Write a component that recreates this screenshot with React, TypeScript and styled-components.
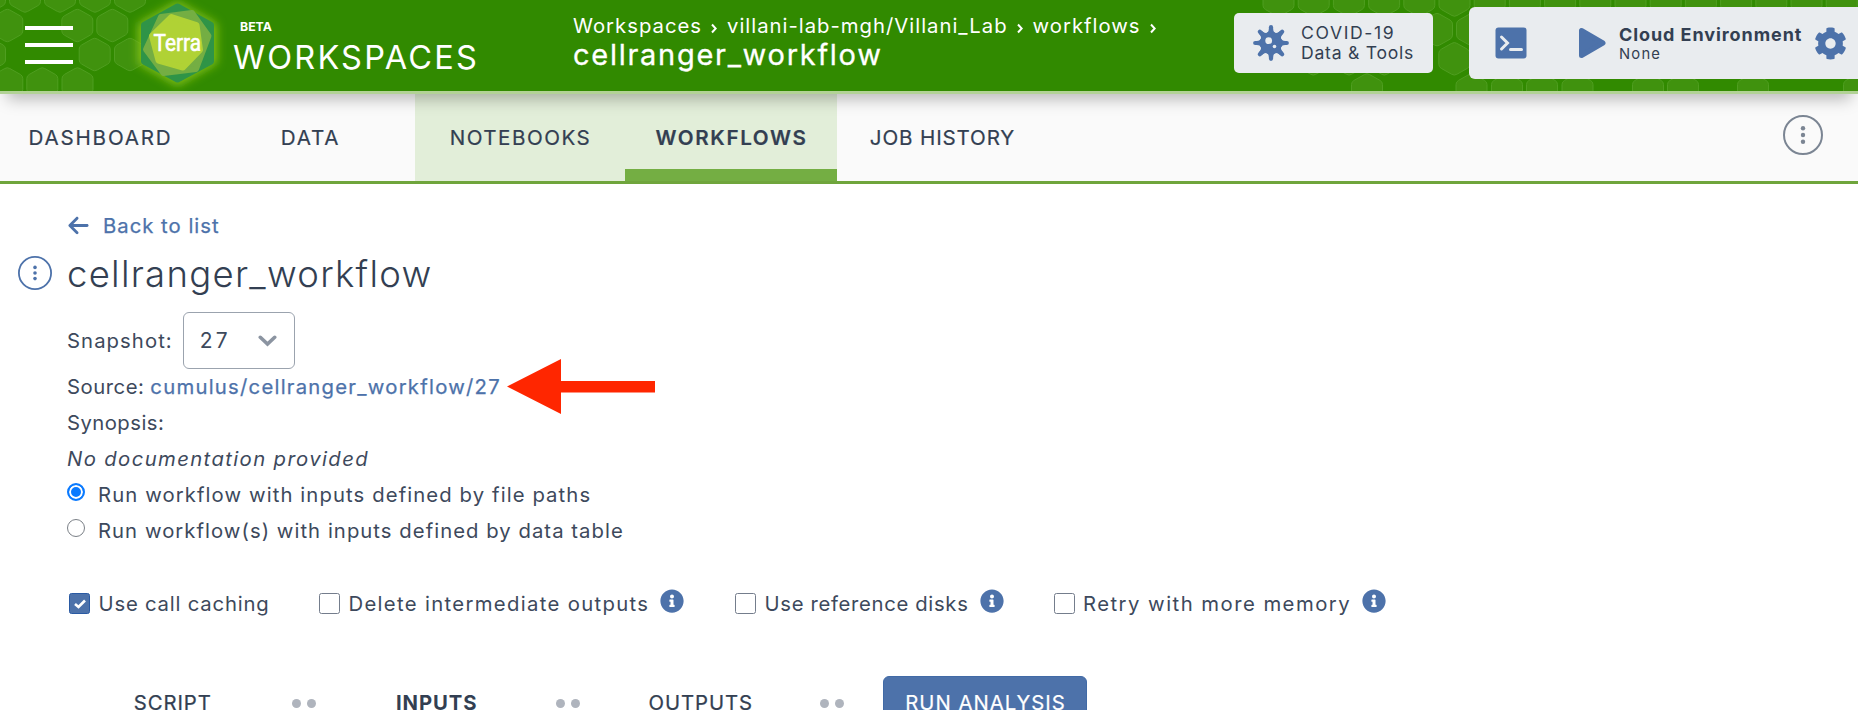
import React from "react";
import styled, { createGlobalStyle, css } from "styled-components";
import { FaCog, FaInfoCircle } from "react-icons/fa";
import { FaArrowLeft } from "react-icons/fa6";

const ink = "#333f52";
const softInk = "#3d495c";
const blue = "#4d72aa";
const panel = "#e9ecef";

const GlobalStyle = createGlobalStyle`
  * { box-sizing: border-box; }
  body {
    margin: 0;
    background: #fff;
    color: ${ink};
    font-family: Inter, "Open Sans", sans-serif;
    font-size: 20.3px;
    overflow: hidden;
  }
`;

const Page = styled.div`
  height: 710px;
  overflow: hidden;
`;

/* ---------- header ---------- */

const Header = styled.header`
  position: relative;
  z-index: 1;
  display: flex;
  height: 94px;
  background: #318a00;
  border-bottom: 3px solid #b2d296;
  box-shadow: 0 12px 15px -7px rgba(0, 0, 0, 0.27);
  color: #fff;
`;

const HexBackdrop = styled.svg`
  position: absolute;
  inset: 0;
  width: 1858px;
  height: 91px;
`;

const MenuButton = styled.div`
  position: relative;
  display: flex;
  flex-direction: column;
  gap: 13px;
  width: 48px;
  margin: 26px 0 0 25px;
`;

const MenuBar = styled.span`
  height: 4px;
  background: #fff;
`;

const Logo = styled.svg`
  position: relative;
  flex: none;
  width: 120px;
  height: 91px;
  margin-left: 44px;
`;

const Brand = styled.div`
  position: relative;
  display: flex;
  flex-direction: column;
  width: 340px;
  margin-left: -4px;
  padding-top: 18px;
`;

const Beta = styled.span`
  padding-left: 7px;
  font-size: 12.3px;
  font-weight: 700;
  line-height: 17px;
`;

const BrandName = styled.span`
  font-size: 32.5px;
  line-height: 46px;
  letter-spacing: 2.2px;
`;

const Location = styled.div`
  position: relative;
  display: flex;
  flex-direction: column;
  width: 661px;
  padding-top: 14px;
`;

const Crumbs = styled.div`
  display: flex;
  line-height: 24px;
  letter-spacing: 1px;
`;

const Separator = styled.svg`
  width: 6px;
  height: 11px;
  margin: 9px 10px 0 9px;
  fill: none;
  stroke: #fff;
  stroke-width: 2;
`;

const LocationTitle = styled.div`
  font-size: 29px;
  line-height: 33px;
  letter-spacing: 1.72px;
  -webkit-text-stroke: 0.3px #fff;
`;

const CovidCard = styled.div`
  position: relative;
  display: flex;
  align-items: center;
  flex: none;
  width: 199px;
  height: 60px;
  margin-top: 13px;
  padding-left: 18px;
  border-radius: 5px;
  background: ${panel};
  color: ${ink};
  font-size: 17.6px;
  line-height: 20px;
`;

const CovidText = styled.div`
  display: flex;
  flex-direction: column;
  margin-left: 11px;
`;

const Tracked = styled.span<{ $by: number }>`
  letter-spacing: ${(p) => p.$by}px;
  white-space: nowrap;
`;

const EnvCard = styled.div`
  position: relative;
  display: flex;
  align-items: center;
  flex: none;
  width: 389px;
  height: 72px;
  margin: 7px 0 0 36px;
  padding-left: 26px;
  border-radius: 6px 0 0 6px;
  background: ${panel};
  color: ${ink};
`;

const PlayIcon = styled.svg`
  margin-left: 51px;
`;

const EnvText = styled.div`
  display: flex;
  flex-direction: column;
  width: 195px;
  margin-left: 13px;
  padding-top: 1.5px;
`;

const EnvName = styled.span`
  font-size: 18px;
  font-weight: 700;
  line-height: 20px;
  letter-spacing: 0.92px;
  white-space: nowrap;
`;

const EnvStatus = styled.span`
  font-size: 14.8px;
  line-height: 18px;
  letter-spacing: 1.2px;
`;

/* ---------- tabs ---------- */

const TabBar = styled.nav`
  display: flex;
  height: 90px;
  padding-right: 35px;
  border-bottom: 3px solid #6fa53c;
  background: #fafafa;
  overflow: hidden;
`;

const Tab = styled.div<{ $tinted?: boolean; $active?: boolean; $track: number }>`
  display: flex;
  justify-content: center;
  flex: none;
  width: ${(p) => (p.$active ? 212 : 210)}px;
  height: 87px;
  padding-left: 1px;
  font-size: 20.6px;
  line-height: 87px;
  letter-spacing: ${(p) => p.$track}px;
  -webkit-text-stroke: 0.2px ${ink};
  &:first-child { margin-left: -5px; }
  ${(p) => p.$tinted && css`background: #e2eed9;`}
  ${(p) => p.$active && css`
    font-weight: 600;
    border-bottom: 12px solid #74ae43;
  `}
`;

const TabMenu = styled.div`
  margin: 21px 0 0 auto;
`;

/* ---------- main ---------- */

const Main = styled.main`
  display: flex;
  flex-direction: column;
  padding: 24px 0 0 67px;
`;

const BackLink = styled.div`
  display: flex;
  align-items: center;
  height: 35px;
  gap: 13px;
  color: ${blue};
  letter-spacing: 1px;
  -webkit-text-stroke: 0.25px ${blue};
`;

const TitleRow = styled.div`
  display: flex;
  align-items: center;
  height: 44px;
  margin: 8px 0 17px -49px;
  gap: 15px;
`;

const Title = styled.h1`
  margin: 2px 0 0;
  font-size: 36.5px;
  font-weight: 300;
  line-height: 40px;
  letter-spacing: 1.28px;
`;

const SnapshotRow = styled.div`
  display: flex;
  align-items: center;
  height: 57px;
  color: ${softInk};
`;

const Select = styled.div`
  display: flex;
  align-items: center;
  justify-content: space-between;
  width: 112px;
  height: 57px;
  margin-left: 10.5px;
  padding: 0 17.5px 0 15.5px;
  border: 1.5px solid #9ba3ae;
  border-radius: 6px;
  font-size: 21px;
  letter-spacing: 3.2px;
`;

const Line = styled.div<{ $track?: number; $italic?: boolean }>`
  display: flex;
  align-items: center;
  height: 36px;
  padding-bottom: 2px;
  color: ${softInk};
  letter-spacing: ${(p) => p.$track ?? 0}px;
  font-style: ${(p) => (p.$italic ? "italic" : "normal")};
`;

const SourceLink = styled.a`
  margin-left: 6px;
  color: ${blue};
  letter-spacing: 1.25px;
  -webkit-text-stroke: 0.25px ${blue};
`;

const PointerArrow = styled.svg`
  flex: none;
  margin: -9px 0 -11px 6px;
`;

const Radio = styled.span<{ $on?: boolean }>`
  width: 18px;
  height: 18px;
  margin: -4px 13px 0 0;
  border: ${(p) => (p.$on ? "2px solid #0a7aff" : "1.5px solid #7a7f86")};
  border-radius: 50%;
  background: ${(p) => (p.$on ? "#0a7aff" : "#fff")};
  box-shadow: ${(p) => (p.$on ? "inset 0 0 0 2px #fff" : "none")};
`;

const Options = styled.div`
  display: flex;
  align-items: center;
  height: 36px;
  margin-top: 37px;
  padding-bottom: 2px;
  color: ${softInk};
`;

const Option = styled.div<{ $width: number; $track: number }>`
  display: flex;
  align-items: center;
  width: ${(p) => p.$width}px;
  letter-spacing: ${(p) => p.$track}px;
  white-space: nowrap;
`;

const CheckBox = styled.span<{ $on?: boolean }>`
  display: flex;
  align-items: center;
  justify-content: center;
  flex: none;
  width: 21px;
  height: 21px;
  margin: 1px 8.5px 0 2px;
  border: 1.5px solid ${(p) => (p.$on ? "#2a5aa3" : "#747d8c")};
  border-radius: 2.5px;
  background: ${(p) => (p.$on ? blue : "#fff")};
`;

const Info = styled(FaInfoCircle)`
  flex: none;
  margin: -4px 0 0 11px;
  color: ${blue};
`;

const Steps = styled.div`
  display: flex;
  align-items: center;
  height: 54px;
  margin-top: 54px;
`;

const Step = styled.div<{ $current?: boolean }>`
  width: 210px;
  padding: 0 0 2px 1.5px;
  text-align: center;
  letter-spacing: 0.95px;
  font-weight: ${(p) => (p.$current ? 700 : 400)};
  -webkit-text-stroke: ${(p) => (p.$current ? "0" : "0.25px")} ${ink};
`;

const Dots = styled.div`
  display: flex;
  justify-content: center;
  gap: 6px;
  width: 54px;
`;

const Dot = styled.span`
  width: 9px;
  height: 9px;
  border-radius: 50%;
  background: #afb4bd;
`;

const RunButton = styled.div`
  width: 204px;
  height: 54px;
  margin-left: 24px;
  padding-left: 1px;
  border: 1px solid #416aa6;
  border-radius: 6px;
  background: ${blue};
  color: #fff;
  line-height: 52px;
  text-align: center;
  letter-spacing: 1px;
  -webkit-text-stroke: 0.2px #fff;
`;

/* ---------- drawings ---------- */

const hexes: [number, number][] = [
  ...[-10, 25, 60, 95, 130].map((x) => [x, -4] as [number, number]),
  ...[7.3, 77.3, 112.3].map((x) => [x, 25.5] as [number, number]),
  ...[-10, 94.7, 130].map((x) => [x, 54.5] as [number, number]),
  ...[7.3, 42.3, 77.5].map((x) => [x, 84] as [number, number]),
  ...Array.from({ length: 17 }, (_, i) => [1278.5 + i * 35.2, 0] as [number, number]),
  ...[1437, 1472].map((x) => [x, 29.6] as [number, number]),
  ...[1313.3, 1349, 1384.3, 1454.3].map((x) => [x, 58.8] as [number, number]),
  ...[1367, 1471.5, 1507, 1542, 1577.5, 1648, 1683, 1753, 1859].map((x) => [x, 90] as [number, number]),
];

const HexPattern = () => (
  <HexBackdrop viewBox="0 0 1858 91">
    <defs>
      <path
        id="hex"
        d="M-2.5 -15.5Q0 -17 2.5 -15.5L13 -9.6Q15.5 -8.2 15.5 -5.5V5.5Q15.5 8.2 13 9.6L2.5 15.5Q0 17 -2.5 15.5L-13 9.6Q-15.5 8.2 -15.5 5.5V-5.5Q-15.5 -8.2 -13 -9.6Z"
        fill="#40920e"
        stroke="#4f9e20"
        strokeWidth="1"
      />
    </defs>
    {hexes.map(([x, y], i) => (
      <use key={i} href="#hex" x={x} y={y} />
    ))}
  </HexBackdrop>
);

const TerraLogo = () => (
  <Logo viewBox="0 0 120 91">
    <defs>
      <filter id="glow" x="-40%" y="-40%" width="180%" height="180%">
        <feGaussianBlur stdDeviation="5" />
      </filter>
    </defs>
    <path
      d="M60.5 2L99 24V63L60.5 85L22 63V24Z"
      fill="#84c014"
      stroke="#84c014"
      strokeWidth="2"
      strokeLinejoin="round"
      filter="url(#glow)"
    />
    <g strokeLinejoin="round" strokeWidth="6">
      <path d="M60.5 6.5L94 25V61.5L60.5 79.5L27 61.5V25Z" fill="#2f9447" stroke="#2f9447" />
      <path d="M44 17L75 13L91.5 36L79 69L46.5 73L29 49.5Z" fill="#74ae43" stroke="#74ae43" />
      <path d="M54.5 17L79.5 25L83 50L66 67.5L41.5 60.5L35 36Z" fill="#b0d235" stroke="#b0d235" />
    </g>
    <text
      x="36.5"
      y="51"
      fill="#fff"
      stroke="#fff"
      strokeWidth="0.6"
      fontFamily="Roboto, sans-serif"
      fontSize="23.5"
      textLength="47.5"
      lengthAdjust="spacingAndGlyphs"
    >
      Terra
    </text>
  </Logo>
);

const VirusIcon = () => (
  <svg width="38" height="38" viewBox="-19 -19 38 38">
    {[0, 45, 90, 135, 180, 225, 270, 315].map((a) => (
      <g key={a} transform={`rotate(${a})`}>
        <path d="M0 -15.8V-8" stroke={blue} strokeWidth="4.2" strokeLinecap="round" />
        <path d="M-2.1 -14.5Q-2 -10.5 -5.5 -9.5V-6H5.5V-9.5Q2 -10.5 2.1 -14.5Z" fill={blue} />
      </g>
    ))}
    <circle r="11" fill={blue} />
    <circle cx="-2.3" cy="-2.3" r="3.4" fill={panel} />
    <circle cx="3.5" cy="3.5" r="1.8" fill={panel} />
  </svg>
);

const TerminalIcon = () => (
  <svg width="32" height="32" viewBox="0 0 32 32">
    <rect x="0.5" y="0.5" width="31" height="31" rx="3" fill={blue} />
    <path d="M6.5 10L12.5 16L6.5 22M15.5 22.5H26.5" fill="none" stroke={panel} strokeWidth="3" strokeLinecap="round" />
  </svg>
);

const Chevron = () => (
  <Separator viewBox="0 0 6 11">
    <path d="M1 1.5L4.7 5.5L1 9.5" />
  </Separator>
);

const Kebab = ({ size, color, stroke, dot }: { size: number; color: string; stroke: number; dot: number }) => (
  <svg width={size} height={size} viewBox={`${-size / 2} ${-size / 2} ${size} ${size}`}>
    <circle r={(size - stroke) / 2} fill="none" stroke={color} strokeWidth={stroke} />
    {[-1, 0, 1].map((n) => (
      <circle key={n} cy={n * dot * 3.1} r={dot} fill={color} />
    ))}
  </svg>
);

export default function App() {
  return (
    <Page>
      <GlobalStyle />
      <Header>
        <HexPattern />
        <MenuButton>
          <MenuBar />
          <MenuBar />
          <MenuBar />
        </MenuButton>
        <TerraLogo />
        <Brand>
          <Beta>BETA</Beta>
          <BrandName>WORKSPACES</BrandName>
        </Brand>
        <Location>
          <Crumbs>
            Workspaces
            <Chevron />
            villani-lab-mgh/Villani_Lab
            <Chevron />
            workflows
            <Chevron />
          </Crumbs>
          <LocationTitle>cellranger_workflow</LocationTitle>
        </Location>
        <CovidCard>
          <VirusIcon />
          <CovidText>
            <Tracked $by={1.6}>COVID-19</Tracked>
            <Tracked $by={0.74}>Data &amp; Tools</Tracked>
          </CovidText>
        </CovidCard>
        <EnvCard>
          <TerminalIcon />
          <PlayIcon width="28" height="32" viewBox="0 0 28 32">
            <path d="M3.5 3.5V28.5L25 16Z" fill={blue} stroke={blue} strokeWidth="5" strokeLinejoin="round" />
          </PlayIcon>
          <EnvText>
            <EnvName>Cloud Environment</EnvName>
            <EnvStatus>None</EnvStatus>
          </EnvText>
          <FaCog size={33} color={blue} />
        </EnvCard>
      </Header>

      <TabBar>
        <Tab $track={1.8}>DASHBOARD</Tab>
        <Tab $track={1.8}>DATA</Tab>
        <Tab $track={1.5} $tinted>NOTEBOOKS</Tab>
        <Tab $track={1.65} $tinted $active>WORKFLOWS</Tab>
        <Tab $track={0.85}>JOB HISTORY</Tab>
        <TabMenu>
          <Kebab size={40} color="#7b8593" stroke={2} dot={2.2} />
        </TabMenu>
      </TabBar>

      <Main>
        <BackLink>
          <FaArrowLeft size={23} />
          Back to list
        </BackLink>
        <TitleRow>
          <Kebab size={34} color={blue} stroke={1.8} dot={1.8} />
          <Title>cellranger_workflow</Title>
        </TitleRow>
        <SnapshotRow>
          <Tracked $by={1.07}>Snapshot:</Tracked>
          <Select>
            27
            <svg width="19" height="12" viewBox="0 0 19 12">
              <path d="M2.3 2.3L9.5 9L16.7 2.3" fill="none" stroke="#8b94a1" strokeWidth="3.6" strokeLinecap="round" />
            </svg>
          </Select>
        </SnapshotRow>
        <Line $track={0.52}>
          Source:
          <SourceLink>cumulus/cellranger_workflow/27</SourceLink>
          <PointerArrow width="148" height="56" viewBox="0 0 148 56">
            <path d="M0 27.5L54 0V22H148V33.5H54V55Z" fill="#ff2600" />
          </PointerArrow>
        </Line>
        <Line $track={0.45}>Synopsis:</Line>
        <Line $track={1.38} $italic>No documentation provided</Line>
        <Line $track={1.1}>
          <Radio $on />
          Run workflow with inputs defined by file paths
        </Line>
        <Line $track={1.04}>
          <Radio />
          Run workflow(s) with inputs defined by data table
        </Line>

        <Options>
          <Option $width={250} $track={0.8}>
            <CheckBox $on>
              <svg width="14" height="12" viewBox="0 0 14 12">
                <path d="M2 6L5.5 9L12 2.5" fill="none" stroke="#fff" strokeWidth="2.6" />
              </svg>
            </CheckBox>
            Use call caching
          </Option>
          <Option $width={416} $track={1.33}>
            <CheckBox />
            Delete intermediate outputs
            <Info size={24} />
          </Option>
          <Option $width={318.5} $track={0.67}>
            <CheckBox />
            Use reference disks
            <Info size={24} />
          </Option>
          <Option $width={340} $track={1.47}>
            <CheckBox />
            Retry with more memory
            <Info size={24} />
          </Option>
        </Options>

        <Steps>
          <Step>SCRIPT</Step>
          <Dots><Dot /><Dot /></Dots>
          <Step $current>INPUTS</Step>
          <Dots><Dot /><Dot /></Dots>
          <Step>OUTPUTS</Step>
          <Dots><Dot /><Dot /></Dots>
          <RunButton>RUN ANALYSIS</RunButton>
        </Steps>
      </Main>
    </Page>
  );
}
